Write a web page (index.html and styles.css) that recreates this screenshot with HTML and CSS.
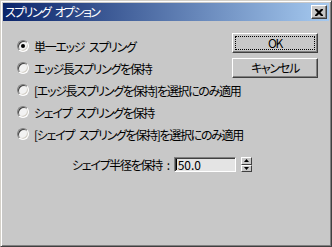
FILE: index.html
```html
<!DOCTYPE html>
<html lang="ja">
<head>
<meta charset="utf-8">
<link rel="stylesheet" href="styles.css">
</head>
<body>
<div class="window">
  <div class="titlebar">
    <span class="title">スプリング&ensp;オプション</span>
    <span class="close"><svg width="8" height="7" viewBox="0 0 8 7"><path d="M0 0h2l2 2 2-2h2v1l-2.5 2.5L8 6v1H6L4 5 2 7H0V6l2.5-2.5L0 1z" fill="#000"/></svg></span>
  </div>
  <div class="client">
    <div class="top">
      <div class="options">
        <div class="opt"><span class="radio on"></span><span>単一エッジ&ensp;スプリング</span></div>
        <div class="opt"><span class="radio"></span><span>エッジ長スプリングを保持</span></div>
        <div class="opt"><span class="radio"></span><span>[エッジ長スプリングを保持]を選択にのみ適用</span></div>
        <div class="opt"><span class="radio"></span><span>シェイプ&ensp;スプリングを保持</span></div>
        <div class="opt"><span class="radio"></span><span>[シェイプ&ensp;スプリングを保持]を選択にのみ適用</span></div>
      </div>
      <div class="buttons">
        <div class="btn"><span class="focus">OK</span></div>
        <div class="btn"><span class="nofocus">キャンセル</span></div>
      </div>
    </div>
    <div class="radius">
      <span class="label">シェイプ半径を保持&ensp;:</span>
      <span class="field"><span class="caret"></span>50.0</span>
      <span class="spin">
        <span class="half"><svg width="5" height="3" viewBox="0 0 5 3"><path d="M2.5 0L5 3H0z" fill="#000"/></svg></span>
        <span class="half"><svg width="5" height="3" viewBox="0 0 5 3"><path d="M0 0h5L2.5 3z" fill="#000"/></svg></span>
      </span>
    </div>
  </div>
</div>
</body>
</html>
```
FILE: styles.css
```css
* { box-sizing: border-box; }
html, body { margin: 0; padding: 0; background: #c8c8c8; }
body {
  font-family: "Noto Sans CJK JP", "Liberation Sans", sans-serif;
  font-size: 12px;
  font-feature-settings: "palt";
  letter-spacing: -1.3px;
  color: #000;
}
.window {
  width: 332px;
  height: 247px;
  background: #c8c8c8;
  border: 1px solid;
  border-color: #d4d0c8 #404040 #404040 #d4d0c8;
  padding: 1px;
  box-shadow: inset 1px 1px 0 #ffffff, inset -1px -1px 0 #808080;
}
.titlebar {
  margin: 1px;
  height: 18px;
  background: linear-gradient(to right, #0a246a, #a6caf0);
  display: flex;
  align-items: center;
  justify-content: space-between;
  padding: 0 2px 0 2px;
}
.title {
  color: #fff;
  font-size: 12px;
  letter-spacing: -1.6px;
  line-height: 18px;
}
.close {
  width: 16px;
  height: 14px;
  background: #c8c8c8;
  border: 1px solid;
  border-color: #ffffff #404040 #404040 #ffffff;
  box-shadow: inset -1px -1px 0 #808080;
  display: flex;
  align-items: center;
  justify-content: center;
}
.client {
  padding: 11px 12px 0 15px;
}
.top {
  display: flex;
}
.options {
  flex: 1;
  min-width: 0;
  margin-top: 2px;
  display: flex;
  flex-direction: column;
}
.opt {
  height: 22px;
  display: flex;
  align-items: center;
  gap: 5px;
  white-space: nowrap;
}
.radio {
  width: 12px;
  height: 12px;
  border-radius: 50%;
  border: 1px solid;
  border-color: #808080 #ffffff #ffffff #808080;
  background: #f2f2f2;
  box-shadow: inset 1px 1px 0 #404040, inset -1px -1px 0 #d4d0c8;
  display: flex;
  align-items: center;
  justify-content: center;
  flex: none;
}
.radio.on::after {
  content: "";
  width: 4px;
  height: 4px;
  border-radius: 50%;
  background: #000;
}
.buttons {
  flex: none;
  display: flex;
  flex-direction: column;
  gap: 5px;
}
.btn {
  width: 86px;
  height: 20px;
  border: 1px solid;
  border-color: #ffffff #404040 #404040 #ffffff;
  box-shadow: inset -1px -1px 0 #808080;
  display: flex;
  padding: 2px;
}
.btn span {
  flex: 1;
  display: flex;
  align-items: center;
  justify-content: center;
  line-height: 1;
}
.focus { border: 1px dotted #000; }
.nofocus { border: 1px solid transparent; }
.radius {
  margin-top: 12px;
  display: flex;
  align-items: center;
  padding-left: 55px;
  height: 15px;
}
.label { white-space: nowrap; }
.field {
  margin-left: 5px;
  width: 62px;
  height: 15px;
  background: #e4e4e4;
  border: 1px solid;
  border-color: #808080 #ffffff #ffffff #808080;
  box-shadow: inset 1px 1px 0 #404040;
  display: flex;
  align-items: center;
  padding-left: 1px;
  line-height: 1;
  letter-spacing: 0;
}
.caret {
  width: 1px;
  height: 11px;
  background: #000;
  margin-right: 1px;
}
.spin {
  margin-left: 5px;
  width: 11px;
  height: 15px;
  display: flex;
  flex-direction: column;
}
.half {
  flex: 1;
  border: 1px solid;
  border-color: #ffffff #404040 #404040 #ffffff;
  display: flex;
  align-items: center;
  justify-content: center;
}
```
